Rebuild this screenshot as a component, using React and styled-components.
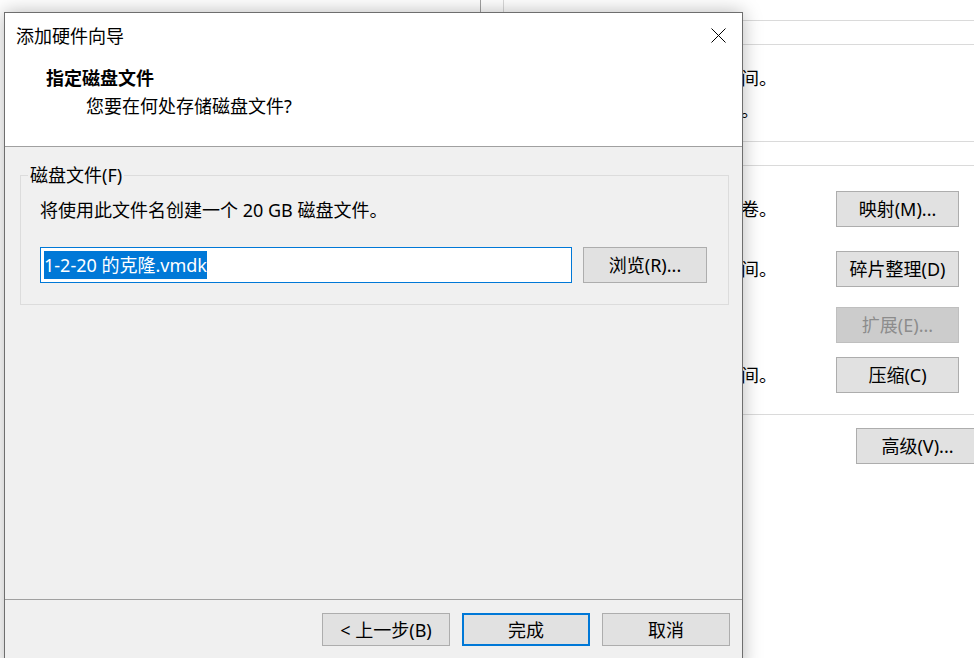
import React from 'react';
import styled, { createGlobalStyle } from 'styled-components';

const Global = createGlobalStyle`
  html, body { margin: 0; padding: 0; background: #fff; overflow: hidden; }
  body {
    font-family: "Noto Sans", "Noto Sans CJK SC", sans-serif;
    font-size: 18px;
    color: #000;
  }
  * { box-sizing: border-box; }
`;

const Desktop = styled.div`
  position: relative;
  width: 974px;
  height: 658px;
  overflow: hidden;
  background: #fff;
`;

/* ---------- background settings window ---------- */
const SettingsWindow = styled.div`
  display: flex;
  width: 1010px;
  height: 100%;
`;

const LeftPane = styled.div`
  width: 481px;
  flex: none;
  border-right: 1px solid #a0a0a0;
`;

const PaneGap = styled.div`
  width: 22px;
  flex: none;
`;

const RightPane = styled.div`
  flex: 1;
  display: flex;
  flex-direction: column;
  border-left: 1px solid #d9d9d9;
`;

const Strip = styled.div`
  flex: none;
  height: ${p => p.$h}px;
  border-bottom: 1px solid #dadada;
`;

const InfoSection = styled.div`
  flex: none;
  height: 97px;
  padding-top: 21px;
  border-bottom: 1px solid #dadada;
  display: flex;
  flex-direction: column;
  gap: 8px;
`;

const InfoText = styled.div`
  padding-left: 21px;
  line-height: 24px;
  white-space: nowrap;
`;

const UtilitySection = styled.div`
  flex: none;
  height: 249px;
  border-bottom: 1px solid #dadada;
  display: flex;
  flex-direction: column;
`;

const UtilityRow = styled.div`
  display: flex;
  align-items: center;
  height: 36px;
  margin-top: ${p => p.$top}px;
`;

const UtilityText = styled.div`
  width: 332px;
  flex: none;
  padding-left: 21px;
  line-height: 24px;
  white-space: nowrap;
  overflow: hidden;
`;

const AdvancedRow = styled.div`
  padding: 13px 0 0 352px;
`;

const Button = styled.div`
  display: flex;
  align-items: center;
  justify-content: center;
  width: ${p => p.$w || 123}px;
  height: ${p => p.$h || 36}px;
  flex: none;
  background: ${p => (p.$disabled ? '#cccccc' : '#e1e1e1')};
  border: ${p => (p.$primary ? '2px solid #0078d7' : p.$disabled ? '1px solid #bfbfbf' : '1px solid #adadad')};
  color: ${p => (p.$disabled ? '#8c8c8c' : '#000')};
  line-height: 24px;
  white-space: nowrap;
`;

/* ---------- dialog ---------- */
const Dialog = styled.div`
  position: absolute;
  left: 4px;
  top: 12px;
  width: 739px;
  height: 660px;
  border: 1px solid #6e6e6e;
  background: #f0f0f0;
  box-shadow: 0 0 18px rgba(0, 0, 0, 0.28);
  display: flex;
  flex-direction: column;
`;

const TitleBar = styled.div`
  flex: none;
  height: 45px;
  background: #fff;
  display: flex;
  align-items: center;
  justify-content: space-between;
  padding-left: 11px;
`;

const Title = styled.div`
  line-height: 24px;
`;

const CloseButton = styled.div`
  width: 48px;
  height: 45px;
  display: flex;
  align-items: center;
  justify-content: center;
`;

const Header = styled.div`
  flex: none;
  height: 89px;
  background: #fff;
  border-bottom: 1px solid #a0a0a0;
  padding: 8px 0 0 41px;
`;

const Heading = styled.div`
  font-weight: 700;
  line-height: 24px;
`;

const SubHeading = styled.div`
  margin-top: 4px;
  padding-left: 40px;
  line-height: 24px;
`;

const Body = styled.div`
  flex: 1;
  padding: 28px 13px 0 15px;
`;

const GroupBox = styled.div`
  position: relative;
  border: 1px solid #dcdcdc;
  padding: 22px 20px 21px 19px;
`;

const Legend = styled.div`
  position: absolute;
  top: -13px;
  left: 7px;
  padding: 0 2px;
  background: #f0f0f0;
  line-height: 24px;
`;

const Description = styled.div`
  line-height: 24px;
`;

const FileRow = styled.div`
  display: flex;
  gap: 11px;
  margin-top: 25px;
`;

const TextBox = styled.div`
  width: 532px;
  height: 36px;
  flex: none;
  background: #fff;
  border: 1px solid #0078d7;
  padding: 3px 0 0 3px;
`;

const Selection = styled.span`
  display: inline-block;
  height: 28px;
  line-height: 28px;
  background: #0078d7;
  color: #fff;
  white-space: nowrap;
`;

const Footer = styled.div`
  flex: none;
  height: 72px;
  border-top: 1px solid #a0a0a0;
  padding: 13px 12px 0 0;
  display: flex;
  justify-content: flex-end;
  gap: 12px;
`;

const CloseIcon = () => (
  <svg width="15" height="15" viewBox="0 0 15 15">
    <line x1="0.5" y1="0.5" x2="14.5" y2="14.5" stroke="#000" strokeWidth="1" />
    <line x1="14.5" y1="0.5" x2="0.5" y2="14.5" stroke="#000" strokeWidth="1" />
  </svg>
);

export default function App() {
  return (
    <>
      <Global />
      <Desktop>
        <SettingsWindow>
          <LeftPane />
          <PaneGap />
          <RightPane>
            <Strip $h={21} />
            <Strip $h={24} />
            <InfoSection>
              <InfoText>没有为此硬盘预分配磁盘空间。</InfoText>
              <InfoText>硬盘内容存储在多个文件中。</InfoText>
            </InfoSection>
            <Strip $h={24} />
            <UtilitySection>
              <UtilityRow $top={25}>
                <UtilityText>将此虚拟机磁盘映射到本地卷。</UtilityText>
                <Button>映射(M)...</Button>
              </UtilityRow>
              <UtilityRow $top={24}>
                <UtilityText>整理文件碎片并合并可用空间。</UtilityText>
                <Button>碎片整理(D)</Button>
              </UtilityRow>
              <UtilityRow $top={20}>
                <UtilityText>扩展磁盘容量。</UtilityText>
                <Button $disabled>扩展(E)...</Button>
              </UtilityRow>
              <UtilityRow $top={14}>
                <UtilityText>压缩磁盘以回收未使用的空间。</UtilityText>
                <Button>压缩(C)</Button>
              </UtilityRow>
            </UtilitySection>
            <AdvancedRow>
              <Button>高级(V)...</Button>
            </AdvancedRow>
          </RightPane>
        </SettingsWindow>

        <Dialog>
          <TitleBar>
            <Title>添加硬件向导</Title>
            <CloseButton>
              <CloseIcon />
            </CloseButton>
          </TitleBar>
          <Header>
            <Heading>指定磁盘文件</Heading>
            <SubHeading>您要在何处存储磁盘文件?</SubHeading>
          </Header>
          <Body>
            <GroupBox>
              <Legend>磁盘文件(F)</Legend>
              <Description>将使用此文件名创建一个 20 GB 磁盘文件。</Description>
              <FileRow>
                <TextBox>
                  <Selection>1-2-20 的克隆.vmdk</Selection>
                </TextBox>
                <Button $w={124}>浏览(R)...</Button>
              </FileRow>
            </GroupBox>
          </Body>
          <Footer>
            <Button $w={128} $h={33}>&lt; 上一步(B)</Button>
            <Button $w={128} $h={33} $primary>完成</Button>
            <Button $w={128} $h={33}>取消</Button>
          </Footer>
        </Dialog>
      </Desktop>
    </>
  );
}
